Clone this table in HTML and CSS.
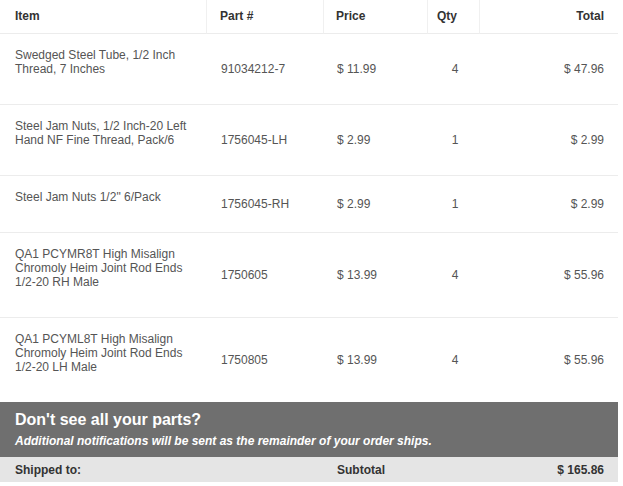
FILE: index.html
```html
<!DOCTYPE html>
<html>
<head>
<meta charset="utf-8">
<link rel="stylesheet" href="styles.css">
</head>
<body>
<div class="order">
  <table class="items">
    <colgroup>
      <col class="c-item"><col class="c-part"><col class="c-price"><col class="c-qty"><col class="c-total">
    </colgroup>
    <thead>
      <tr>
        <th class="h-item">Item</th>
        <th class="h-part">Part #</th>
        <th class="h-price">Price</th>
        <th class="h-qty">Qty</th>
        <th class="h-total">Total</th>
      </tr>
    </thead>
    <tbody>
      <tr>
        <td class="item">Swedged Steel Tube, 1/2 Inch Thread, 7 Inches</td>
        <td class="part">91034212-7</td>
        <td class="price">$ 11.99</td>
        <td class="qty">4</td>
        <td class="total">$ 47.96</td>
      </tr>
      <tr>
        <td class="item">Steel Jam Nuts, 1/2 Inch-20 Left Hand NF Fine Thread, Pack/6</td>
        <td class="part">1756045-LH</td>
        <td class="price">$ 2.99</td>
        <td class="qty">1</td>
        <td class="total">$ 2.99</td>
      </tr>
      <tr>
        <td class="item">Steel Jam Nuts 1/2" 6/Pack</td>
        <td class="part">1756045-RH</td>
        <td class="price">$ 2.99</td>
        <td class="qty">1</td>
        <td class="total">$ 2.99</td>
      </tr>
      <tr>
        <td class="item">QA1 PCYMR8T High Misalign Chromoly Heim Joint Rod Ends 1/2-20 RH Male</td>
        <td class="part">1750605</td>
        <td class="price">$ 13.99</td>
        <td class="qty">4</td>
        <td class="total">$ 55.96</td>
      </tr>
      <tr class="last">
        <td class="item">QA1 PCYML8T High Misalign Chromoly Heim Joint Rod Ends 1/2-20 LH Male</td>
        <td class="part">1750805</td>
        <td class="price">$ 13.99</td>
        <td class="qty">4</td>
        <td class="total">$ 55.96</td>
      </tr>
    </tbody>
  </table>
  <div class="notice">
    <div class="notice-title">Don't see all your parts?</div>
    <div class="notice-sub">Additional notifications will be sent as the remainder of your order ships.</div>
  </div>
  <div class="summary">
    <div class="s-ship">Shipped to:</div>
    <div class="s-label">Subtotal</div>
    <div class="s-qty"></div>
    <div class="s-total">$ 165.86</div>
  </div>
</div>
</body>
</html>
```

FILE: styles.css
```css
html, body {
  margin: 0;
  padding: 0;
  background: #ffffff;
}

body {
  font-family: "Liberation Sans", Arial, sans-serif;
  font-size: 12px;
  color: #555555;
}

.order {
  width: 618px;
}

.items {
  width: 618px;
  border-collapse: separate;
  border-spacing: 0;
  table-layout: fixed;
}

.c-item { width: 207px; }
.c-part { width: 117px; }
.c-price { width: 104px; }
.c-qty { width: 52px; }
.c-total { width: 138px; }

th {
  font-weight: bold;
  color: #333333;
  text-align: left;
  line-height: 14px;
  padding: 9px 0 10px;
  border-bottom: 1px solid #ececec;
  border-right: 1px solid #f0f0f0;
}

.h-item { padding-left: 15px; }
.h-part { padding-left: 13px; }
.h-price { padding-left: 12px; }
.h-qty { padding-left: 9px; }
.h-total { text-align: right; padding-right: 14px; border-right: none; }

td {
  line-height: 14px;
  vertical-align: middle;
  border-bottom: 1px solid #ececec;
  padding: 0;
}

.last td {
  border-bottom: none;
}

td.item {
  padding: 14px 15px 28px 15px;
  vertical-align: top;
}

td.part { padding-left: 14px; }
td.price { padding-left: 13px; }
td.qty { text-align: center; padding-left: 2px; }
td.total { text-align: right; padding-right: 14px; }

.notice {
  background: #6f6f6f;
  color: #ffffff;
  padding: 8px 15px 8px;
}

.notice-title {
  font-size: 16px;
  font-weight: bold;
  line-height: 20px;
}

.notice-sub {
  margin-top: 3px;
  font-size: 12px;
  font-weight: bold;
  font-style: italic;
  line-height: 16px;
}

.summary {
  display: grid;
  grid-template-columns: 324px 104px 52px 138px;
  background: #e5e5e5;
  color: #333333;
  font-weight: bold;
  line-height: 14px;
  padding: 6px 0 5px;
}

.s-ship { padding-left: 15px; }
.s-label { padding-left: 13px; }
.s-total { text-align: right; padding-right: 14px; }
```
